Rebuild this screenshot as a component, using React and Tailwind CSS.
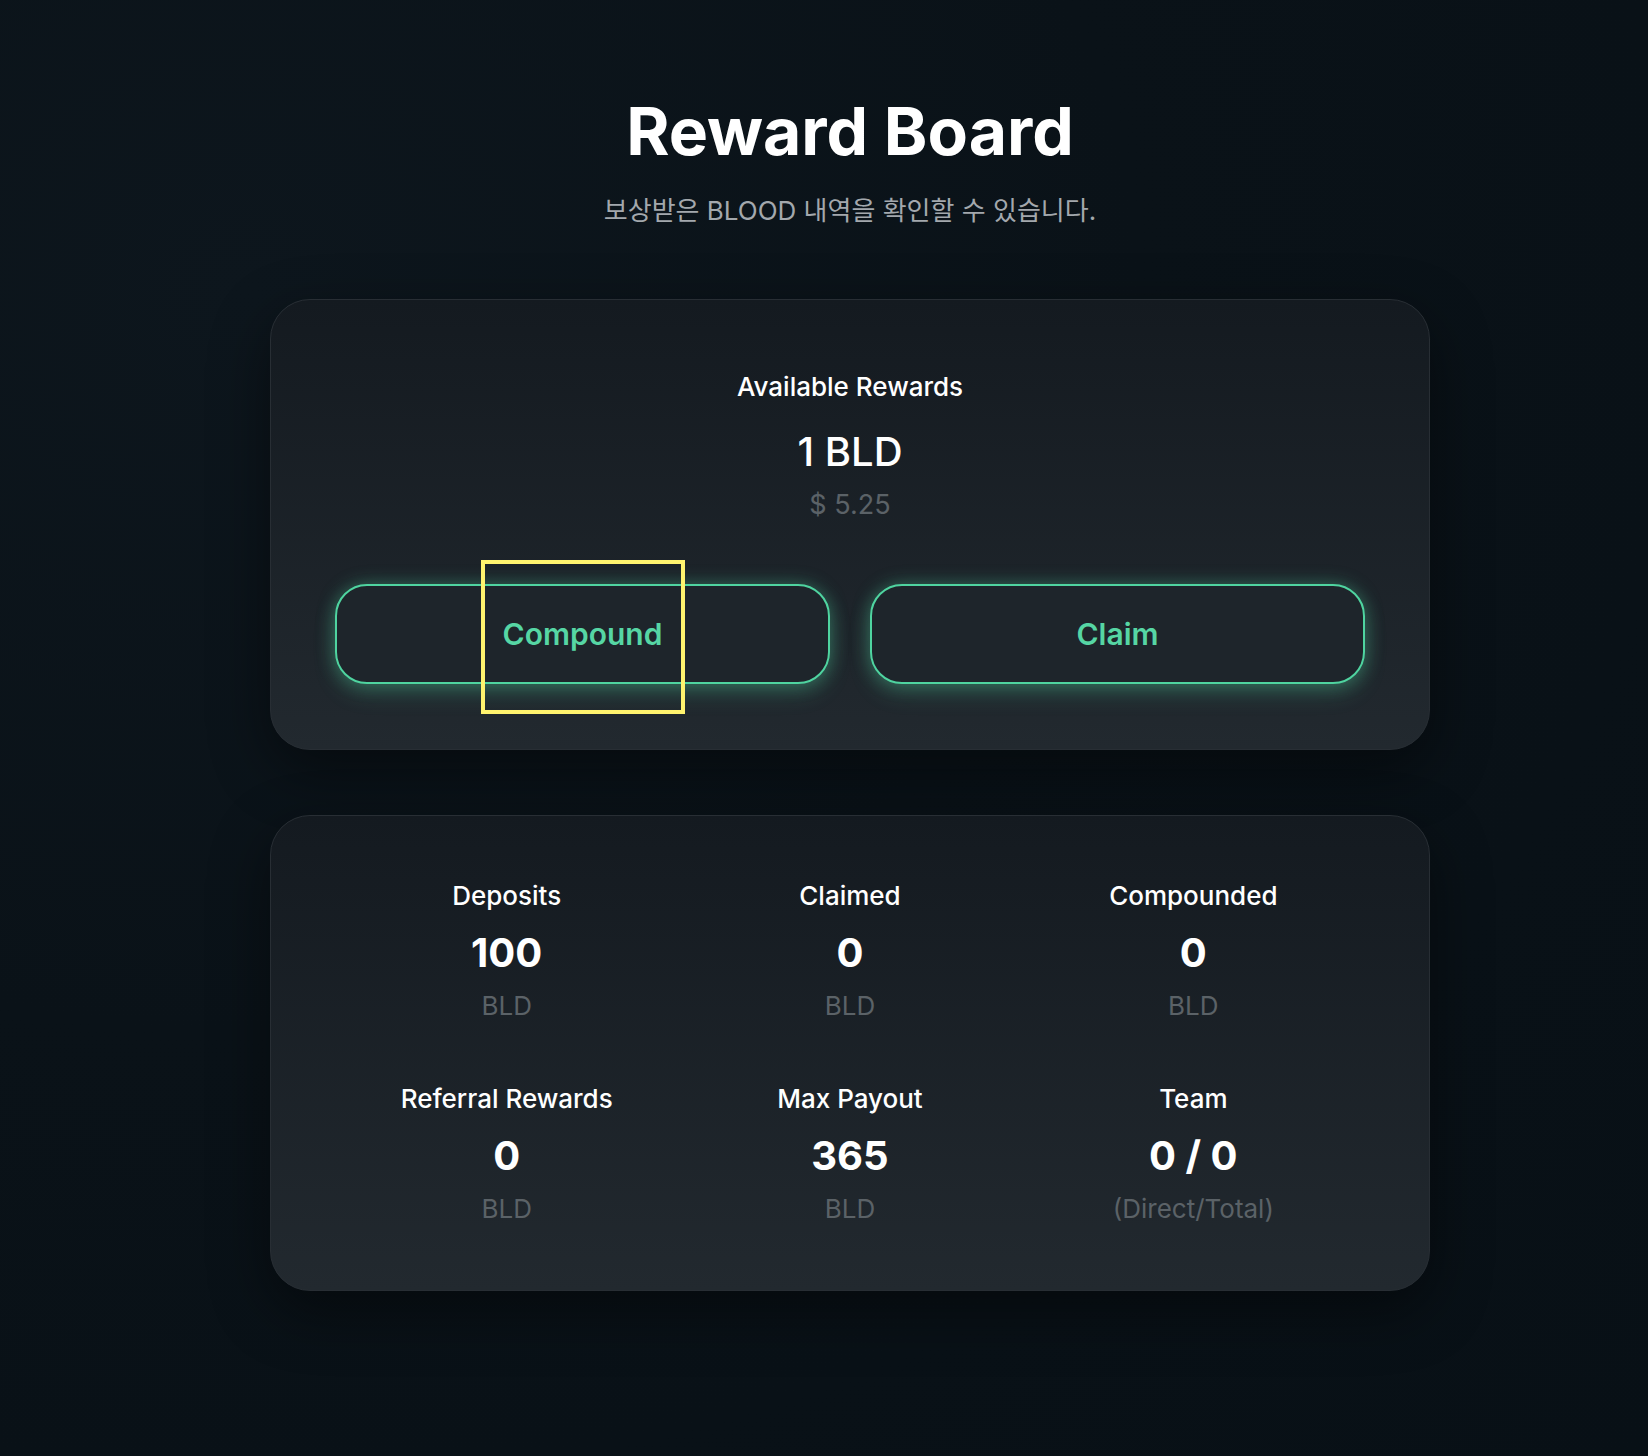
import React from 'react';

const STATS = [
  { label: 'Deposits', value: '100', unit: 'BLD' },
  { label: 'Claimed', value: '0', unit: 'BLD' },
  { label: 'Compounded', value: '0', unit: 'BLD' },
  { label: 'Referral Rewards', value: '0', unit: 'BLD' },
  { label: 'Max Payout', value: '365', unit: 'BLD' },
  { label: 'Team', value: '0 / 0', unit: '(Direct/Total)' }
];

const cardClass =
  'w-[1160px] rounded-[40px] border border-[#282e34] bg-gradient-to-b from-[#141a20] to-[#22292f] shadow-[0_20px_60px_rgba(0,0,0,0.45)]';

export default function App() {
  return (
    <div
      className="min-h-screen w-full bg-[#0a1218] bg-[radial-gradient(ellipse_at_15%_20%,#0d161d_0%,#0a1218_45%,#081016_100%)] flex flex-col items-center pt-[98px] pl-[52px] text-white"
      style={{ fontFamily: "Inter, 'Noto Sans CJK KR', sans-serif" }}
    >
      {/* Header */}
      <h1 className="text-[66px] leading-[66px] font-bold text-white">Reward Board</h1>
      <p className="mt-[30px] text-[26px] leading-[34px] text-[#a3a8ad]">
        보상받은 BLOOD 내역을 확인할 수 있습니다.
      </p>

      {/* Available rewards */}
      <div className={`${cardClass} mt-[71px] px-16 pt-[71px] pb-[65px] flex flex-col items-center`}>
        <div className="text-[26px] leading-[32px] font-medium text-white">Available Rewards</div>
        <div className="mt-[29px] text-[40px] leading-[40px] font-medium text-white">1 BLD</div>
        <div className="mt-[17px] text-[27px] leading-[32px] text-[#5b6267]">$ 5.25</div>
        <div className="mt-[63px] w-full grid grid-cols-2 gap-10">
          <button className="relative h-[100px] rounded-[32px] border-2 border-[#4fd4a0] bg-[#1e252b] text-[30px] font-semibold text-[#56d6a4] shadow-[0_0_18px_rgba(79,212,160,0.35),0_10px_22px_rgba(79,212,160,0.2)]">
            Compound
            <span className="pointer-events-none absolute left-[144px] top-[-26px] w-[204px] h-[154px] border-4 border-[#fff36e]" />
          </button>
          <button className="h-[100px] rounded-[32px] border-2 border-[#4fd4a0] bg-[#1e252b] text-[30px] font-semibold text-[#56d6a4] shadow-[0_0_18px_rgba(79,212,160,0.35),0_10px_22px_rgba(79,212,160,0.2)]">
            Claim
          </button>
        </div>
      </div>

      {/* Stats */}
      <div className={`${cardClass} mt-[65px] px-16 pt-16 pb-[65px] grid grid-cols-3 gap-y-[61px]`}>
        {STATS.map((s) => (
          <div key={s.label} className="flex flex-col items-center">
            <div className="text-[26px] leading-[32px] font-medium text-white">{s.label}</div>
            <div className="mt-[21px] text-[40px] leading-[40px] font-bold text-white">{s.value}</div>
            <div className="mt-[17px] text-[26px] leading-[32px] text-[#5b6267]">{s.unit}</div>
          </div>
        ))}
      </div>
    </div>
  );
}
